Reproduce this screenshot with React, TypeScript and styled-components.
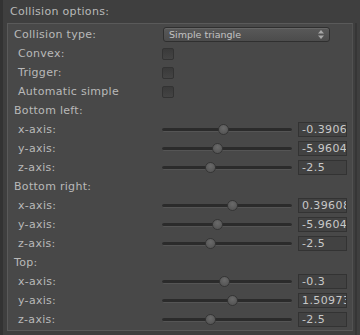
import React from 'react';
import styled, { createGlobalStyle } from 'styled-components';

const Global = createGlobalStyle`
  html, body {
    margin: 0;
    padding: 0;
    background: #3e3e3e;
  }
  * {
    box-sizing: border-box;
  }
`;

const Window = styled.div`
  width: 360px;
  height: 335px;
  background: #3f3f3f;
  border-left: 3px solid #333333;
  display: flex;
  flex-direction: column;
  font-family: 'DejaVu Sans', 'Liberation Sans', sans-serif;
  font-size: 11px;
  color: #b9b9b9;
  overflow: hidden;
`;

const Header = styled.div`
  height: 23px;
  padding-left: 7px;
  display: flex;
  align-items: center;
  letter-spacing: 0.3px;
`;

const Body = styled.div`
  display: flex;
`;

const Panel = styled.div`
  margin-left: 4px;
  width: 346px;
  height: 308px;
  background: #484848;
  border: 1px solid #5a5a5a;
  border-right-color: #525252;
  padding: 1px 4px 0 6px;
  display: flex;
  flex-direction: column;
`;

const Gutter = styled.div`
  margin-left: 2px;
  width: 2px;
  height: 312px;
  background: #363636;
`;

const Row = styled.div`
  height: 19px;
  display: flex;
  align-items: center;
`;

const Label = styled.div<{ $indent?: boolean }>`
  width: 148px;
  padding-left: ${(p) => (p.$indent ? '4px' : '0')};
  letter-spacing: 0.3px;
  white-space: nowrap;
`;

const Dropdown = styled.div`
  margin-left: 1px;
  width: 167px;
  height: 15px;
  border-radius: 3px;
  border: 1px solid #2f2f2f;
  background: linear-gradient(#595959, #4c4c4c);
  box-shadow: inset 0 1px 0 #666666;
  display: flex;
  align-items: center;
  justify-content: space-between;
  padding: 0 5px 0 5px;
  font-size: 9.5px;
  color: #c2c2c2;
`;

const Arrows = styled.svg`
  width: 6px;
  height: 9px;
`;

const Checkbox = styled.div`
  width: 12px;
  height: 12px;
  border-radius: 2px;
  border: 1px solid #333333;
  background: linear-gradient(#3a3a3a, #444444);
`;

const SliderTrack = styled.div`
  position: relative;
  width: 130px;
  height: 4px;
  border-radius: 2px;
  background: #2b2b2b;
  border-bottom: 1px solid #555555;
`;

const Thumb = styled.div`
  position: absolute;
  top: -4px;
  width: 11px;
  height: 11px;
  margin-left: -5px;
  border-radius: 50%;
  background: radial-gradient(circle at 50% 35%, #6a6a6a, #575757 70%);
  border: 1px solid #353535;
`;

const NumberBox = styled.div`
  margin-left: 6px;
  width: 49px;
  height: 15px;
  background: #424242;
  border: 1px solid #333333;
  padding-left: 3px;
  display: flex;
  align-items: center;
  color: #c8c8c8;
  letter-spacing: 0.4px;
  overflow: hidden;
  white-space: nowrap;
`;

type Axis = { label: string; value: string; pos: number };

const groups: { title: string; axes: Axis[] }[] = [
  {
    title: 'Bottom left:',
    axes: [
      { label: 'x-axis:', value: '-0.3906', pos: 61 },
      { label: 'y-axis:', value: '-5.9604', pos: 55 },
      { label: 'z-axis:', value: '-2.5', pos: 48 },
    ],
  },
  {
    title: 'Bottom right:',
    axes: [
      { label: 'x-axis:', value: '0.39608', pos: 70 },
      { label: 'y-axis:', value: '-5.9604', pos: 55 },
      { label: 'z-axis:', value: '-2.5', pos: 48 },
    ],
  },
  {
    title: 'Top:',
    axes: [
      { label: 'x-axis:', value: '-0.3', pos: 62 },
      { label: 'y-axis:', value: '1.50973', pos: 70 },
      { label: 'z-axis:', value: '-2.5', pos: 48 },
    ],
  },
];

const toggles = ['Convex:', 'Trigger:', 'Automatic simple'];

const App = () => {
  return (
    <Window>
      <Global />
      <Header>Collision options:</Header>
      <Body>
        <Panel>
          <Row>
            <Label>Collision type:</Label>
            <Dropdown>
              <span>Simple triangle</span>
              <Arrows viewBox="0 0 6 9">
                <path d="M3 0 L6 3.5 L0 3.5 Z" fill="#a8a8a8" />
                <path d="M3 9 L6 5.5 L0 5.5 Z" fill="#a8a8a8" />
              </Arrows>
            </Dropdown>
          </Row>
          {toggles.map((t) => (
            <Row key={t}>
              <Label $indent>{t}</Label>
              <Checkbox />
            </Row>
          ))}
          {groups.map((g) => (
            <React.Fragment key={g.title}>
              <Row>
                <Label>{g.title}</Label>
              </Row>
              {g.axes.map((a) => (
                <Row key={a.label}>
                  <Label $indent>{a.label}</Label>
                  <SliderTrack>
                    <Thumb style={{ left: a.pos }} />
                  </SliderTrack>
                  <NumberBox>{a.value}</NumberBox>
                </Row>
              ))}
            </React.Fragment>
          ))}
        </Panel>
        <Gutter />
      </Body>
    </Window>
  );
};

export default App;
